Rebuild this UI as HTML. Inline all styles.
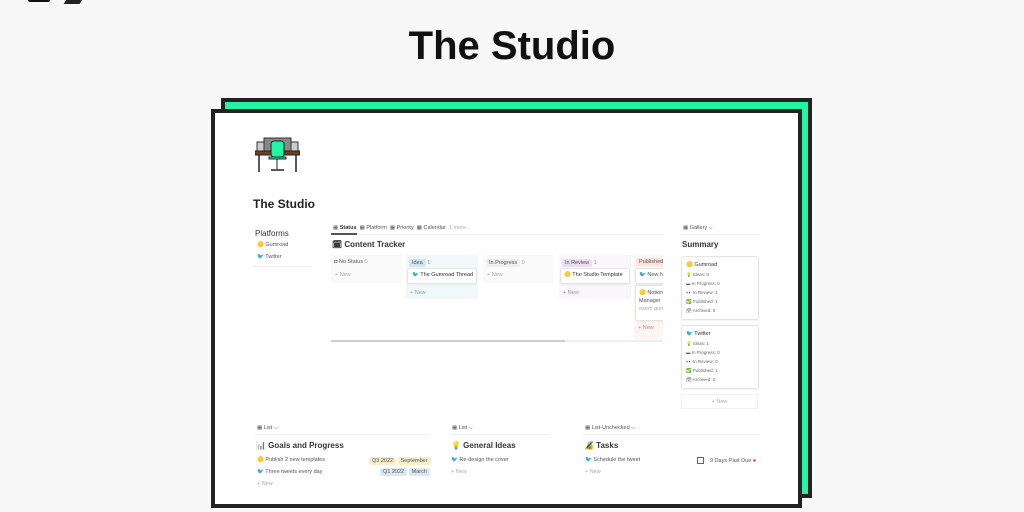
<!DOCTYPE html>
<html><head><style>
*{margin:0;padding:0;box-sizing:border-box}
body{width:1024px;height:512px;background:#f7f7f7;font-family:"Liberation Sans",sans-serif;position:relative;overflow:hidden;color:#37352f}
.a{position:absolute;white-space:nowrap}
h1{position:absolute;left:0;width:1024px;top:24px;text-align:center;font-size:40px;font-weight:bold;color:#111}
.s{font-size:5.5px;color:#555}
.g{color:#aaa}
.tag{display:inline-block;padding:1px 3px;border-radius:2px;font-size:5.5px}
.card{background:#fff;box-shadow:0 0 0 1px #e4e4e4,0 1px 2px #ddd;border-radius:2px}
</style></head><body>
<div class="a" style="left:28px;top:-6px;width:22px;height:8px;border:2px solid #111;border-radius:2px"></div>
<div class="a" style="left:66px;top:-4px;width:16px;height:8px;background:#222;transform:skewX(-30deg)"></div>
<h1>The Studio</h1>
<div class="a" style="left:221px;top:98px;width:591px;height:400px;background:#222;"></div>
<div class="a" style="left:225px;top:102px;width:583px;height:392px;background:#22f5a3"></div>
<div class="a" style="left:211px;top:109px;width:591px;height:399px;background:#222"></div>
<div class="a" style="left:215px;top:113px;width:583px;height:391px;background:#fff"></div>

<svg class="a" style="left:255px;top:136px" width="45" height="40">
<rect x="9" y="2" width="27" height="14" fill="#888" stroke="#333"/>
<rect x="2" y="6" width="7" height="11" fill="#ccc" stroke="#333"/>
<rect x="36" y="6" width="7" height="11" fill="#ccc" stroke="#333"/>
<rect x="0" y="15" width="45" height="4" fill="#6b3e1e" stroke="#222"/>
<rect x="16" y="5" width="13" height="16" rx="3" fill="#22f5a3" stroke="#222"/>
<rect x="14" y="21" width="17" height="2" fill="#22f5a3" stroke="#222"/>
<line x1="4" y1="19" x2="4" y2="36" stroke="#222" stroke-width="1.5"/>
<line x1="41" y1="19" x2="41" y2="36" stroke="#222" stroke-width="1.5"/>
<line x1="22" y1="23" x2="22" y2="33" stroke="#222"/>
<line x1="16" y1="34" x2="29" y2="34" stroke="#222" stroke-width="1.5"/>
</svg>
<div class="a" style="left:253px;top:197px;font-size:12px;font-weight:bold;color:#222">The Studio</div>

<div class="a" style="left:255px;top:229px;font-size:8px">Platforms</div>
<div class="a s" style="left:257px;top:242px">🟡 Gumroad</div>
<div class="a s" style="left:257px;top:254px"><span style="color:#1da1f2">🐦</span> Twitter</div>
<div class="a" style="left:253px;top:266px;width:58px;border-top:1px solid #eee"></div>

<div class="a s" style="left:333px;top:225px">▦ <b style="color:#333">Status</b> &nbsp;▦ Platform &nbsp;▦ Priority &nbsp;▦ Calendar &nbsp;<span class="g">1 more...</span></div>
<div class="a" style="left:331px;top:234px;width:332px;border-top:1px solid #eee"></div>
<div class="a" style="left:331px;top:233px;width:26px;border-top:2px solid #555"></div>
<div class="a" style="left:332px;top:240px;font-size:8px;font-weight:bold">🗓 Content Tracker</div>

<div class="a" style="left:331px;top:255px;width:71px;height:28px;background:#fafafa"></div>
<div class="a s" style="left:334px;top:259px">◘ No Status <span class="g">0</span></div>
<div class="a s g" style="left:335px;top:272px">+ New</div>

<div class="a" style="left:406px;top:255px;width:72px;height:44px;background:#f1f8fb"></div>
<div class="a s" style="left:409px;top:259px"><span class="tag" style="background:#d3e5ef">Idea</span> <span style="color:#79a">1</span></div>
<div class="a card s" style="left:408px;top:269px;width:68px;height:14px;padding:3px 4px;color:#333"><span style="color:#1da1f2">🐦</span> The Gumroad Thread</div>
<div class="a s" style="left:410px;top:290px;color:#7aa">+ New</div>

<div class="a" style="left:483px;top:255px;width:71px;height:28px;background:#fafafa"></div>
<div class="a s" style="left:486px;top:259px"><span class="tag" style="background:#eee">In Progress</span> <span class="g">0</span></div>
<div class="a s g" style="left:487px;top:272px">+ New</div>

<div class="a" style="left:559px;top:255px;width:72px;height:44px;background:#f9f6fc"></div>
<div class="a s" style="left:562px;top:259px"><span class="tag" style="background:#e8deee">In Review</span> <span style="color:#a8a">1</span></div>
<div class="a card s" style="left:561px;top:269px;width:68px;height:14px;padding:3px 3px;color:#333">🟡 The Studio Template</div>
<div class="a s" style="left:563px;top:290px;color:#a8a">+ New</div>

<div class="a" style="left:634px;top:255px;width:29px;height:85px;background:#fdf5f2;overflow:hidden">
<div class="a s" style="left:2px;top:3px"><span class="tag" style="background:#ffe2dd">Published</span></div>
<div class="a card s" style="left:2px;top:14px;width:40px;height:14px;padding:3px"><span style="color:#1da1f2">🐦</span> New N</div>
<div class="a card s" style="left:2px;top:31px;width:40px;height:34px;padding:3px;line-height:8px">🟡 Notion<br>Manager<br><span class="g">esem gum</span></div>
<div class="a s" style="left:4px;top:70px;color:#e77">+ New</div>
</div>
<div class="a" style="left:331px;top:340px;width:332px;height:2px;background:#eee"></div>
<div class="a" style="left:331px;top:340px;width:234px;height:2px;background:#cfcfcf"></div>

<div class="a s" style="left:683px;top:225px">▦ Gallery ⌵</div>
<div class="a" style="left:681px;top:234px;width:78px;border-top:1px solid #eee"></div>
<div class="a" style="left:682px;top:240px;font-size:8px;font-weight:bold">Summary</div>
<div class="a card" style="left:682px;top:257px;width:76px;height:62px;padding:4px;font-size:4.5px;line-height:9px;color:#666"><div style="font-size:5.5px;color:#333">🟡 Gumroad</div>💡 Ideas: 0<br>▬ In Progress: 0<br>👀 In Review: 1<br>✅ Published: 1<br>🗃 Archived: 0</div>
<div class="a card" style="left:682px;top:326px;width:76px;height:62px;padding:4px;font-size:4.5px;line-height:9px;color:#666"><div style="font-size:5.5px;color:#333"><span style="color:#1da1f2">🐦</span> Twitter</div>💡 Ideas: 1<br>▬ In Progress: 0<br>👀 In Review: 0<br>✅ Published: 1<br>🗃 Archived: 0</div>
<div class="a s g" style="left:681px;top:394px;width:77px;height:15px;border:1px solid #f0f0f0;text-align:center;padding-top:4px">+ New</div>

<div class="a s" style="left:257px;top:425px">▦ List ⌵</div>
<div class="a" style="left:255px;top:434px;width:174px;border-top:1px solid #eee"></div>
<div class="a" style="left:256px;top:441px;font-size:8px;font-weight:bold">📊 Goals and Progress</div>
<div class="a s" style="left:257px;top:457px">🟡 Publish 2 new templates</div>
<div class="a s" style="left:369px;top:457px"><span class="tag" style="background:#fbeccd">Q3 2022</span> <span class="tag" style="background:#fbeccd">September</span></div>
<div class="a s" style="left:257px;top:469px"><span style="color:#1da1f2">🐦</span> Three tweets every day</div>
<div class="a s" style="left:380px;top:468px"><span class="tag" style="background:#d9e8f2">Q1 2022</span> <span class="tag" style="background:#d9e8f2">March</span></div>
<div class="a s g" style="left:257px;top:481px">+ New</div>

<div class="a s" style="left:452px;top:425px">▦ List ⌵</div>
<div class="a" style="left:450px;top:434px;width:100px;border-top:1px solid #eee"></div>
<div class="a" style="left:451px;top:441px;font-size:8px;font-weight:bold">💡 General Ideas</div>
<div class="a s" style="left:451px;top:457px"><span style="color:#1da1f2">🐦</span> Re-design the cover</div>
<div class="a s g" style="left:451px;top:469px">+ New</div>

<div class="a s" style="left:585px;top:425px">▦ List-Unchecked ⌵</div>
<div class="a" style="left:583px;top:434px;width:176px;border-top:1px solid #eee"></div>
<div class="a" style="left:584px;top:441px;font-size:8px;font-weight:bold">🔏 Tasks</div>
<div class="a s" style="left:585px;top:457px"><span style="color:#1da1f2">🐦</span> Schedule the tweet</div>
<div class="a" style="left:697px;top:457px;width:7px;height:7px;border:1px solid #666"></div>
<div class="a s" style="left:710px;top:458px">9 Days Past Due <span style="color:#e22">●</span></div>
<div class="a s g" style="left:585px;top:469px">+ New</div>
</body></html>
